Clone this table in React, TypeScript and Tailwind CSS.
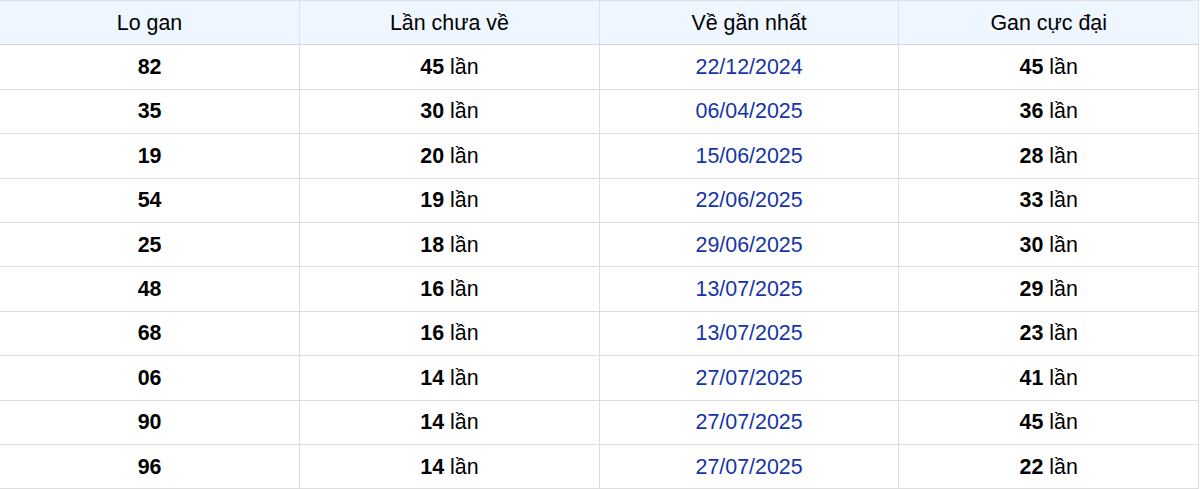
import React from "react";

const rows = [
  ["82", "45", "22/12/2024", "45"],
  ["35", "30", "06/04/2025", "36"],
  ["19", "20", "15/06/2025", "28"],
  ["54", "19", "22/06/2025", "33"],
  ["25", "18", "29/06/2025", "30"],
  ["48", "16", "13/07/2025", "29"],
  ["68", "16", "13/07/2025", "23"],
  ["06", "14", "27/07/2025", "41"],
  ["90", "14", "27/07/2025", "45"],
  ["96", "14", "27/07/2025", "22"],
];

export default function App() {
  return (
    <div className="w-[1200px] h-[489px] overflow-hidden bg-white" style={{ fontFamily: '"Liberation Sans", Arial, sans-serif' }}>
      <table className="w-[1199px] border-collapse table-fixed text-[21.4px] text-black">
        <thead>
          <tr className="bg-[#eef6ff]">
            {["Lo gan", "Lần chưa về", "Về gần nhất", "Gan cực đại"].map((h, i) => (
              <th
                key={i}
                className="h-[44.4px] font-normal text-center border border-[#dfe1e4] border-b-[#d0d7df] border-l-0 p-0"
              >
                {h}
              </th>
            ))}
          </tr>
        </thead>
        <tbody>
          {rows.map((r, i) => (
            <tr key={i}>
              <td className="h-[44.4px] text-center font-bold border border-[#dedede] border-l-0 p-0">{r[0]}</td>
              <td className="h-[44.4px] text-center border border-[#dedede] p-0">
                <b>{r[1]}</b> lần
              </td>
              <td className="h-[44.4px] text-center border border-[#dedede] p-0 text-[#1434a8]">{r[2]}</td>
              <td className="h-[44.4px] text-center border border-[#dedede] p-0">
                <b>{r[3]}</b> lần
              </td>
            </tr>
          ))}
        </tbody>
      </table>
    </div>
  );
}
